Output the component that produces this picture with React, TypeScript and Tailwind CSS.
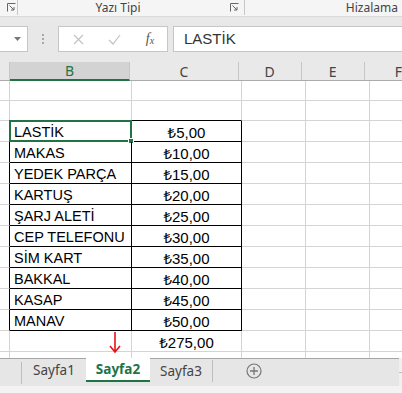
import React from 'react';

const items: [string, string][] = [
  ['LASTİK', '5,00'],
  ['MAKAS', '10,00'],
  ['YEDEK PARÇA', '15,00'],
  ['KARTUŞ', '20,00'],
  ['ŞARJ ALETİ', '25,00'],
  ['CEP TELEFONU', '30,00'],
  ['SİM KART', '35,00'],
  ['BAKKAL', '40,00'],
  ['KASAP', '45,00'],
  ['MANAV', '50,00'],
];

const cellFont = { fontFamily: '"Liberation Sans", "Noto Sans", Arial, sans-serif' };
const uiFont = { fontFamily: '"Noto Sans", "Open Sans", sans-serif' };
const lira = { fontFamily: '"Noto Sans", "DejaVu Sans", sans-serif' };

const Launcher = () => (
  <svg width="9" height="9" viewBox="0 0 9 9" className="text-[#666]">
    <path d="M0.5 8.5 V0.5 H8.5" fill="none" stroke="currentColor" strokeWidth="1" />
    <path d="M2.5 2.5 L7 7 M7 4 V7 H4" fill="none" stroke="currentColor" strokeWidth="1" />
  </svg>
);

const Money = ({ v }: { v: string }) =>
  v ? (
    <span>
      <span style={lira} className="font-normal">₺</span>
      {v}
    </span>
  ) : null;

const App: React.FC = () => {
  const rows: { h: string; b: string; c: string; kind: 'empty' | 'item' | 'total' | 'top' }[] = [
    { h: 'h-[20px]', b: '', c: '', kind: 'empty' },
    { h: 'h-[20px]', b: '', c: '', kind: 'top' },
    ...items.map(([b, c]) => ({ h: 'h-[21px]', b, c, kind: 'item' as const })),
    { h: 'h-[21px]', b: '', c: '275,00', kind: 'total' },
    { h: 'h-[21px]', b: '', c: '', kind: 'empty' },
  ];

  return (
    <div className="w-[402px] h-[393px] overflow-hidden bg-[#f3f3f3] flex flex-col" style={uiFont}>
      {/* ribbon group labels */}
      <div className="h-[17px] bg-[#f5f5f5] border-b border-[#dadada] flex items-start text-[12px] text-[#444] leading-[15px]">
        <div className="w-[18px] h-[15px] border-r border-[#c8c8c8] flex items-center justify-start pl-[7px]">
          <Launcher />
        </div>
        <div className="w-[227px] h-[15px] border-r border-[#c8c8c8] flex items-center">
          <span className="flex-1 text-center pr-[12px]">Yazı Tipi</span>
          <span className="pr-[5px] flex items-center"><Launcher /></span>
        </div>
        <div className="flex-1 text-right pr-[4px]">Hizalama</div>
      </div>

      {/* formula bar */}
      <div className="h-[45px] bg-[#e8e8e8] flex items-start pt-[9px]">
        <div className="w-[28px] h-[26px] bg-white border border-[#c6c6c6] border-l-0 flex items-center justify-end pr-[6px]">
          <svg width="7" height="4" viewBox="0 0 7 4"><path d="M0 0 H7 L3.5 4 Z" fill="#777" /></svg>
        </div>
        <div className="w-[30px] h-[26px] flex flex-col items-center justify-center gap-[2px]">
          <span className="w-[2px] h-[2px] bg-[#a8a8a8]" />
          <span className="w-[2px] h-[2px] bg-[#a8a8a8]" />
          <span className="w-[2px] h-[2px] bg-[#a8a8a8]" />
        </div>
        <div className="w-[110px] h-[26px] bg-white border border-[#c6c6c6] flex items-center">
          <div className="w-[38px] flex justify-center">
            <svg width="11" height="11" viewBox="0 0 11 11"><path d="M1 1 L10 10 M10 1 L1 10" stroke="#c2c2c2" strokeWidth="1.2" /></svg>
          </div>
          <div className="w-[34px] flex justify-center">
            <svg width="13" height="11" viewBox="0 0 13 11"><path d="M1 6 L5 10 L12 1" fill="none" stroke="#c2c2c2" strokeWidth="1.2" /></svg>
          </div>
          <div className="flex-1 flex justify-center pl-[2px] text-[#555] italic text-[14px] leading-none" style={{ fontFamily: '"Liberation Serif", serif' }}>
            f<span className="text-[10px] mt-[4px]">x</span>
          </div>
        </div>
        <div className="w-[5px]" />
        <div className="flex-1 h-[26px] bg-white border border-[#c6c6c6] border-r-0 flex items-center pl-[10px] text-[15px] text-[#333]" style={cellFont}>
          LASTİK
        </div>
      </div>

      {/* grid */}
      <div className="relative h-[296px] overflow-hidden bg-white text-black" style={cellFont}>
        {/* column headers */}
        <div className="flex h-[19px] bg-[#e9e9e9] text-[14px] text-[#444] border-b border-[#ababab]" style={uiFont}>
          <div className="w-[10px] border-r border-[#c6c6c6]" />
          <div className="w-[122px] bg-[#d3d3d3] text-[#217346] flex items-center justify-center border-b-2 border-[#217346] border-r border-r-[#c6c6c6] -mb-[1px]">B</div>
          <div className="w-[110px] flex items-center justify-center border-r border-[#c6c6c6]">C</div>
          <div className="w-[64px] flex items-center justify-center border-r border-[#c6c6c6]">D</div>
          <div className="w-[64px] flex items-center justify-center border-r border-[#c6c6c6]">E</div>
          <div className="flex-1 flex items-center pl-[30px]">F</div>
        </div>

        {rows.map((r, i) => {
          const inTable = r.kind === 'item';
          const topEdge = r.kind === 'top';
          const rowHead = inTable ? 'border-r-black' : 'border-r-[#d4d4d4]';
          const bc = inTable || topEdge ? 'border-black' : 'border-[#d4d4d4]';
          return (
            <div key={i} className={`flex ${r.h}`}>
              <div className={`w-[10px] border-r border-b border-b-[#d4d4d4] ${rowHead}`} />
              <div className={`relative w-[122px] border-b ${bc} ${inTable ? 'border-r border-r-black' : 'border-r border-r-[#d4d4d4]'} flex items-end pl-[4px] text-[14.5px] leading-[17px]`}>
                {r.b}
                {i === 2 && (
                  <div className="absolute -left-[1px] -top-[1px] w-[123px] h-[22px] border-2 border-[#217346]">
                    <div className="absolute -right-[4px] -bottom-[4px] w-[6px] h-[6px] bg-[#217346] border border-white" />
                  </div>
                )}
              </div>
              <div className={`w-[110px] border-b ${bc} border-r ${inTable ? 'border-r-black' : 'border-r-[#d4d4d4]'} flex items-end justify-center text-[15px] leading-[17px]`}>
                <Money v={r.c} />
              </div>
              <div className="w-[64px] border-r border-b border-[#d4d4d4]" />
              <div className="w-[64px] border-r border-b border-[#d4d4d4]" />
              <div className="flex-1 border-b border-[#d4d4d4]" />
            </div>
          );
        })}

        {/* red annotation arrow */}
        <svg className="absolute left-[109px] top-[270px]" width="12" height="22" viewBox="0 0 12 22">
          <path d="M6 0 V20 M1 14 L6 20 L11 14" fill="none" stroke="#e4141b" strokeWidth="1.6" />
        </svg>
      </div>

      {/* sheet tabs */}
      <div className="flex h-[28px]">
        <div className="w-[399px] bg-[#e6e6e6] border-t border-[#a6a6a6] flex items-start text-[13.5px] text-[#444]">
          <div className="w-[22px] h-[22px] border-r border-[#bdbdbd] mt-[3px]" />
          <div className="w-[64px] h-[23px] flex items-center justify-center">Sayfa1</div>
          <div className="w-[64px] h-[24px] -mt-[1px] bg-white border-b-2 border-[#217346] flex items-center justify-center font-bold text-[#217346]">Sayfa2</div>
          <div className="w-[63px] h-[22px] border-r border-[#bdbdbd] mt-[3px] flex items-center justify-center -translate-y-[2px]">Sayfa3</div>
          <div className="w-[82px] h-[23px] flex items-center justify-center">
            <svg width="16" height="16" viewBox="0 0 16 16">
              <circle cx="8" cy="8" r="7" fill="none" stroke="#777" strokeWidth="1.2" />
              <path d="M8 4 V12 M4 8 H12" stroke="#777" strokeWidth="1.3" />
            </svg>
          </div>
        </div>
        <div className="flex-1 bg-[#f0f0f0] flex items-center">
          <div className="w-full h-[1px] bg-[#bdbdbd]" />
        </div>
      </div>
      <div className="flex-1 bg-[#f3f3f3]" />
    </div>
  );
};

export default App;
